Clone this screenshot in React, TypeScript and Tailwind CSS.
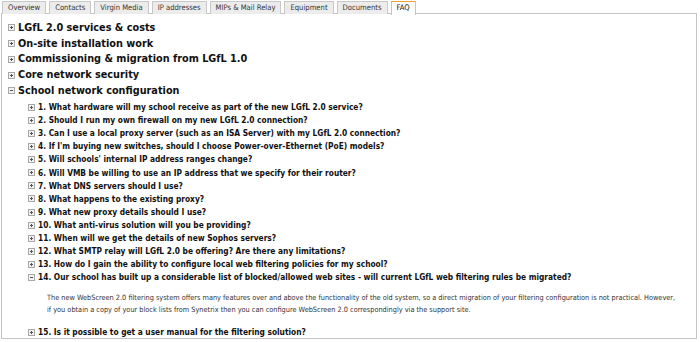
import { useState } from 'react'

const TABS = [
  'Overview',
  'Contacts',
  'Virgin Media',
  'IP addresses',
  'MIPs & Mail Relay',
  'Equipment',
  'Documents',
  'FAQ',
]

const SECTIONS = [
  'LGfL 2.0 services & costs',
  'On-site installation work',
  'Commissioning & migration from LGfL 1.0',
  'Core network security',
]

const QUESTIONS = [
  '1. What hardware will my school receive as part of the new LGfL 2.0 service?',
  '2. Should I run my own firewall on my new LGfL 2.0 connection?',
  '3. Can I use a local proxy server (such as an ISA Server) with my LGfL 2.0 connection?',
  "4. If I'm buying new switches, should I choose Power-over-Ethernet (PoE) models?",
  "5. Will schools' internal IP address ranges change?",
  '6. Will VMB be willing to use an IP address that we specify for their router?',
  '7. What DNS servers should I use?',
  '8. What happens to the existing proxy?',
  '9. What new proxy details should I use?',
  '10. What anti-virus solution will you be providing?',
  '11. When will we get the details of new Sophos servers?',
  '12. What SMTP relay will LGfL 2.0 be offering? Are there any limitations?',
  '13. How do I gain the ability to configure local web filtering policies for my school?',
  '14. Our school has built up a considerable list of blocked/allowed web sites - will current LGfL web filtering rules be migrated?',
  '15. Is it possible to get a user manual for the filtering solution?',
]

function Toggle({ open }: { open: boolean }) {
  return (
    <svg width="7" height="7" viewBox="0 0 7 7" className="shrink-0">
      <rect x="0.5" y="0.5" width="6" height="6" fill="#f2f2f2" stroke="#a8a8a8" />
      <path d="M2 3.5h3" stroke="#555" />
      {!open && <path d="M3.5 2v3" stroke="#555" />}
    </svg>
  )
}

export default function App() {
  const [openQ, setOpenQ] = useState(13)

  return (
    <div className="w-[700px] h-[342px] bg-white text-[#111] font-['DejaVu_Sans',sans-serif] [font-stretch:condensed] overflow-hidden">
      <div className="flex gap-[3px] pl-[2px] pt-[1px] h-[14px]">
        {TABS.map((t) => (
          <div
            key={t}
            className={`px-[5px] text-[7.6px] leading-[12px] border border-b-0 ${
              t === 'FAQ'
                ? 'bg-white border-[#c4c4c4] border-t-[#f0a030] relative z-10 h-[14px]'
                : 'bg-[#ececec] border-[#c8c8c8] text-[#333] h-[13px]'
            }`}
          >
            {t}
          </div>
        ))}
      </div>

      <div className="ml-[1px] mr-[3px] h-[326px] border border-[#c4c4c4] -mt-px pt-[6px]">
        {SECTIONS.map((s) => (
          <div key={s} className="flex items-center gap-[3px] pl-[6px] h-[15.75px] font-bold text-[10.8px]">
            <Toggle open={false} />
            <span>{s}</span>
          </div>
        ))}
        <div className="flex items-center gap-[3px] pl-[6px] h-[15.75px] font-bold text-[10.8px]">
          <Toggle open />
          <span>School network configuration</span>
        </div>

        <div className="pl-[26px] pt-[2px]">
          {QUESTIONS.map((q, i) => (
            <div key={q}>
              <div
                onClick={() => setOpenQ(openQ === i ? -1 : i)}
                className="flex items-center gap-[3px] h-[13.1px] font-bold text-[8.3px] cursor-pointer whitespace-nowrap"
              >
                <Toggle open={openQ === i} />
                <span>{q}</span>
              </div>
              {openQ === i && (
                <div className="pl-[19px] pt-[8px] pb-[10px] text-[7.3px] leading-[12px] text-[#333] whitespace-nowrap">
                  <p>
                    The new WebScreen 2.0 filtering system offers many features over and above the functionality of the old
                    system, so a direct migration of your filtering configuration is not practical. However,
                  </p>
                  <p>
                    if you obtain a copy of your block lists from Synetrix then you can configure WebScreen 2.0
                    correspondingly via the support site.
                  </p>
                </div>
              )}
            </div>
          ))}
        </div>
      </div>
    </div>
  )
}
